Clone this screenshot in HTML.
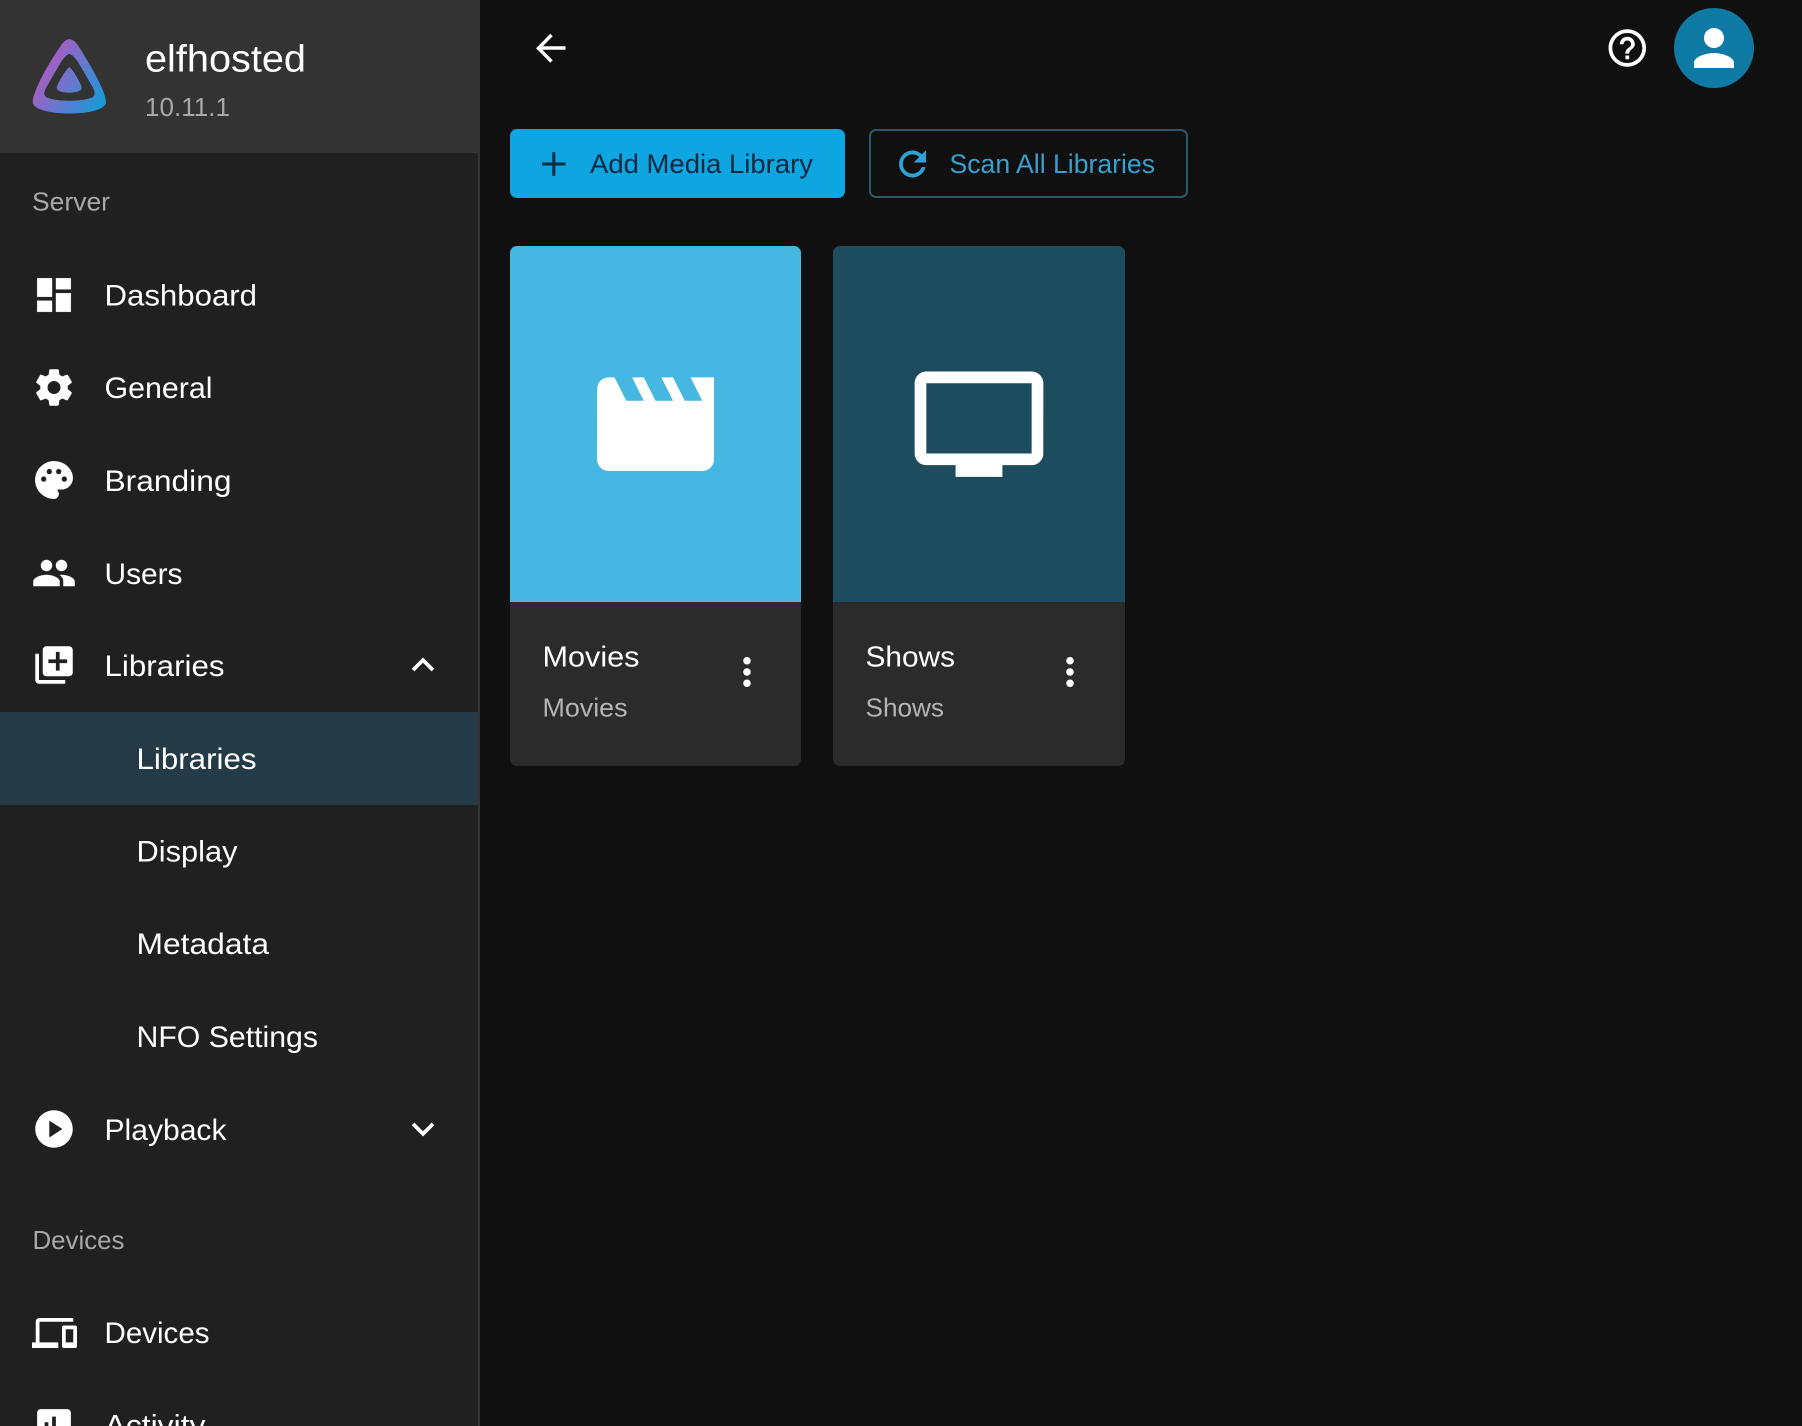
<!DOCTYPE html>
<html lang="en">
<head>
<meta charset="utf-8">
<title>Libraries</title>
<style>
html,body{margin:0;padding:0;background:#101010;width:1802px;height:1426px;overflow:hidden}
svg{display:block}
text{font-family:"Liberation Sans","Noto Sans CJK JP",sans-serif;}
.nav{font-size:30px;fill:#fff}
.sec{font-size:26px;fill:#a8a8a8}
.i{fill:#fff}
</style>
</head>
<body>
<svg xmlns="http://www.w3.org/2000/svg" width="1802" height="1426" viewBox="0 0 1802 1426">
<defs>
<linearGradient id="jf" gradientUnits="userSpaceOnUse" x1="42.3" y1="67.8" x2="113.1" y2="108.8">
<stop offset="0" stop-color="#AA5CC3"/><stop offset="1" stop-color="#00A4DC"/>
</linearGradient>
</defs>
<rect width="1802" height="1426" fill="#101010"/>

<!-- Sidebar -->
<rect x="0" y="0" width="478" height="1426" fill="#202020"/>
<rect x="478" y="0" width="2" height="1426" fill="#333333"/>
<rect x="0" y="0" width="479" height="153" fill="#333333"/>
<g fill="url(#jf)">
<path fill-rule="evenodd" d="M69.4 39.3C73 39.3 76 42 79 47C88 61 106 91 106 102C106 109 90 113.5 69.4 113.5C49 113.5 32.7 109 32.7 102C32.7 91 50 61 60 47C63 42 66 39.3 69.4 39.3zM69.4 54C67 54 64 58 61 62L47 86C43 93 44 96 47 97.5C53 100 61 100.7 69.4 100.7C78 100.7 86 100 92 97.5C95 96 96 93 92 86L78 62C75 58 72 54 69.4 54z"/>
<path d="M69.4 67.3C67 67.3 56.5 85 56.7 88C57 91 62 92.7 69.4 92.7C76 92.7 81.5 91 81.7 88C82 85 71.5 67.3 69.4 67.3z"/>
</g>
<text x="145" y="71.5" font-size="38" fill="#fff" textLength="161" lengthAdjust="spacingAndGlyphs">elfhosted</text>
<text x="145" y="116" class="sec" textLength="85" lengthAdjust="spacingAndGlyphs">10.11.1</text>
<text x="32" y="210.5" class="sec" textLength="78" lengthAdjust="spacingAndGlyphs">Server</text>

<rect x="0" y="712" width="478" height="93" fill="#243a46"/>

<text x="104.5" y="305.5" class="nav" textLength="152.5" lengthAdjust="spacingAndGlyphs">Dashboard</text>
<text x="104.5" y="398" class="nav" textLength="108" lengthAdjust="spacingAndGlyphs">General</text>
<text x="104.5" y="491" class="nav" textLength="127" lengthAdjust="spacingAndGlyphs">Branding</text>
<text x="104.5" y="584" class="nav" textLength="78" lengthAdjust="spacingAndGlyphs">Users</text>
<text x="104.5" y="676" class="nav" textLength="120" lengthAdjust="spacingAndGlyphs">Libraries</text>
<text x="136.5" y="769" class="nav" textLength="120" lengthAdjust="spacingAndGlyphs">Libraries</text>
<text x="136.5" y="861.5" class="nav" textLength="101" lengthAdjust="spacingAndGlyphs">Display</text>
<text x="136.5" y="954" class="nav" textLength="132.5" lengthAdjust="spacingAndGlyphs">Metadata</text>
<text x="136.5" y="1047" class="nav" textLength="181.5" lengthAdjust="spacingAndGlyphs">NFO Settings</text>
<text x="104.5" y="1140" class="nav" textLength="122" lengthAdjust="spacingAndGlyphs">Playback</text>
<text x="32.5" y="1249" class="sec" textLength="92" lengthAdjust="spacingAndGlyphs">Devices</text>
<text x="104.5" y="1343" class="nav" textLength="105" lengthAdjust="spacingAndGlyphs">Devices</text>
<text x="104.5" y="1435.5" class="nav" textLength="101" lengthAdjust="spacingAndGlyphs">Activity</text>

<!-- Sidebar icons -->
<g class="i">
<path transform="translate(31.5 272.5) scale(1.875)" d="M3 13h8V3H3v10zm0 8h8v-6H3v6zm10 0h8V11h-8v10zm0-18v6h8V3h-8z" stroke="#fff" stroke-width=".08"/>
<path transform="translate(31.5 365) scale(1.875)" stroke="#fff" stroke-width=".3" d="M19.14 12.94c.04-.3.06-.61.06-.94 0-.32-.02-.64-.07-.94l2.03-1.58c.18-.14.23-.41.12-.61l-1.92-3.32c-.12-.22-.37-.29-.59-.22l-2.39.96c-.5-.38-1.03-.7-1.62-.94l-.36-2.54c-.04-.24-.24-.41-.48-.41h-3.84c-.24 0-.43.17-.47.41l-.36 2.54c-.59.24-1.13.57-1.62.94l-2.39-.96c-.22-.08-.47 0-.59.22L2.74 8.87c-.12.21-.08.47.12.61l2.03 1.58c-.05.3-.09.63-.09.94s.02.64.07.94l-2.03 1.58c-.18.14-.23.41-.12.61l1.92 3.32c.12.22.37.29.59.22l2.39-.96c.5.38 1.03.7 1.62.94l.36 2.54c.05.24.24.41.48.41h3.84c.24 0 .44-.17.47-.41l.36-2.54c.59-.24 1.13-.56 1.62-.94l2.39.96c.22.08.47 0 .59-.22l1.92-3.32c.12-.22.07-.47-.12-.61l-2.01-1.58zM12 15.6c-1.98 0-3.6-1.62-3.6-3.6s1.62-3.6 3.6-3.6 3.6 1.62 3.6 3.6-1.62 3.6-3.6 3.6z"/>
<path transform="translate(31.5 457.5) scale(1.875)" stroke="#fff" stroke-width=".2" d="M12 2C6.49 2 2 6.49 2 12s4.49 10 10 10c1.38 0 2.5-1.12 2.5-2.5 0-.61-.23-1.2-.64-1.67-.08-.1-.13-.21-.13-.33 0-.28.22-.5.5-.5H16c3.31 0 6-2.69 6-6 0-4.96-4.49-9-10-9zm5.5 11c-.83 0-1.5-.67-1.5-1.5s.67-1.5 1.5-1.5 1.5.67 1.5 1.5-.67 1.5-1.5 1.5zm-3-4c-.83 0-1.5-.67-1.5-1.5S13.67 6 14.5 6s1.5.67 1.5 1.5S15.33 9 14.5 9zM5 11.5c0-.83.67-1.5 1.5-1.5s1.5.67 1.5 1.5S7.33 13 6.5 13 5 12.33 5 11.5zm6-4c0 .83-.67 1.5-1.5 1.5S8 8.33 8 7.5 8.67 6 9.5 6s1.5.67 1.5 1.5z"/>
<path transform="translate(31.5 550.5) scale(1.875)" stroke="#fff" stroke-width=".12" d="M16 11c1.66 0 2.99-1.34 2.99-3S17.66 5 16 5c-1.66 0-3 1.34-3 3s1.34 3 3 3zm-8 0c1.66 0 2.99-1.34 2.99-3S9.66 5 8 5C6.34 5 5 6.34 5 8s1.34 3 3 3zm0 2c-2.33 0-7 1.17-7 3.5V19h14v-2.5c0-2.33-4.67-3.5-7-3.5zm8 0c-.29 0-.62.02-.97.05 1.16.84 1.97 1.97 1.97 3.45V19h6v-2.5c0-2.33-4.67-3.5-7-3.5z"/>
<path transform="translate(31.5 642.5) scale(1.875)" d="M4 6H2v14c0 1.1.9 2 2 2h14v-2H4V6zm16-4H8c-1.1 0-2 .9-2 2v12c0 1.1.9 2 2 2h12c1.1 0 2-.9 2-2V4c0-1.1-.9-2-2-2zm-1 9h-4v4h-2v-4H9V9h4V5h2v4h4v2z"/>
<path transform="translate(400.5 642.5) scale(1.875)" d="M12 8l-6 6 1.41 1.41L12 10.83l4.59 4.58L18 14z"/>
<path transform="translate(31.5 1106.5) scale(1.875)" d="M12 2C6.48 2 2 6.48 2 12s4.48 10 10 10 10-4.48 10-10S17.52 2 12 2zM9.5 16.5v-9l7 4.5-7 4.5z"/>
<path transform="translate(400.5 1106.5) scale(1.875)" d="M16.59 8.59L12 13.17 7.41 8.59 6 10l6 6 6-6z"/>
<path transform="translate(32 1310.5) scale(1.875)" d="M4 6h18V4H4c-1.1 0-2 .9-2 2v11H0v3h14v-3H4V6zm19 2h-6c-.55 0-1 .45-1 1v10c0 .55.45 1 1 1h6c.55 0 1-.45 1-1V9c0-.55-.45-1-1-1zm-1 9h-4v-7h4v7z"/>
<path transform="translate(31.5 1403.5) scale(1.875)" d="M19 3H5c-1.1 0-2 .9-2 2v14c0 1.1.9 2 2 2h14c1.1 0 2-.9 2-2V5c0-1.1-.9-2-2-2zM9 17H7v-7h2v7zm4 0h-2V7h2v10zm4 0h-2v-4h2v4z"/>
</g>

<!-- Top bar -->
<path d="M565.5 48H538.5M551.5 35 538.5 48.2 551.5 61.5" fill="none" stroke="#fff" stroke-width="3.4"/>
<path class="i" transform="translate(1604.8 25.5) scale(1.875)" d="M11 18h2v-2h-2v2zm1-16C6.48 2 2 6.48 2 12s4.48 10 10 10 10-4.48 10-10S17.52 2 12 2zm0 18c-4.41 0-8-3.59-8-8s3.59-8 8-8 8 3.59 8 8-3.59 8-8 8zm0-14c-2.21 0-4 1.79-4 4h2c0-1.1.9-2 2-2s2 .9 2 2c0 2-3 1.75-3 5h2c0-2.25 3-2.5 3-5 0-2.21-1.79-4-4-4z"/>
<circle cx="1714" cy="48" r="40" fill="#0f7ba5"/>
<path class="i" transform="translate(1684 18) scale(2.5)" d="M12 12c2.21 0 4-1.79 4-4s-1.79-4-4-4-4 1.79-4 4 1.79 4 4 4zm0 2c-2.67 0-8 1.34-8 4v2h16v-2c0-2.66-5.33-4-8-4z"/>

<!-- Buttons -->
<rect x="510" y="129" width="335" height="69" rx="7" fill="#0ea5e0"/>
<path fill="#0b2a40" d="M552.3 152.2h3v10.3h10.3v3h-10.3v10.3h-3v-10.3H542v-3h10.3z"/>
<text x="590" y="173" font-size="27" fill="#0b2a40" textLength="223" lengthAdjust="spacingAndGlyphs">Add Media Library</text>

<rect x="870" y="130" width="317" height="67" rx="6" fill="none" stroke="#2c5869" stroke-width="2"/>
<path fill="#2ea3d6" stroke="#2ea3d6" stroke-width=".3" transform="translate(892.7 144.2) scale(1.65)" d="M17.65 6.35C16.2 4.9 14.21 4 12 4c-4.42 0-7.99 3.58-7.99 8s3.57 8 7.99 8c3.73 0 6.84-2.55 7.73-6h-2.08c-.82 2.33-3.04 4-5.65 4-3.31 0-6-2.69-6-6s2.69-6 6-6c1.66 0 3.14.69 4.22 1.78L13 11h7V4l-2.35 2.35z"/>
<text x="949.5" y="173" font-size="27" fill="#38a0cf" textLength="205.5" lengthAdjust="spacingAndGlyphs">Scan All Libraries</text>

<!-- Card: Movies -->
<rect x="510" y="246" width="291" height="520" rx="7" fill="#2b2b2b"/>
<path d="M510 602V253a7 7 0 0 1 7-7h277a7 7 0 0 1 7 7v349z" fill="#45b7e1"/>
<path class="i" transform="translate(585.3 354) scale(5.85)" d="M18 4l2 4h-3l-2-4h-2l2 4h-3l-2-4H8l2 4H7L5 4H4c-1.1 0-1.99.9-1.99 2L2 18c0 1.1.9 2 2 2h16c1.1 0 2-.9 2-2V4h-4z"/>
<text x="542.5" y="666.5" font-size="29" fill="#fff" textLength="97" lengthAdjust="spacingAndGlyphs">Movies</text>
<text x="542.5" y="716.5" font-size="26" fill="#b4b4b4" textLength="85" lengthAdjust="spacingAndGlyphs">Movies</text>
<path class="i" transform="translate(724.5 649.5) scale(1.875)" d="M12 8c1.1 0 2-.9 2-2s-.9-2-2-2-2 .9-2 2 .9 2 2 2zm0 2c-1.1 0-2 .9-2 2s.9 2 2 2 2-.9 2-2-.9-2-2-2zm0 6c-1.1 0-2 .9-2 2s.9 2 2 2 2-.9 2-2-.9-2-2-2z"/>

<!-- Card: Shows -->
<rect x="833" y="246" width="292" height="520" rx="7" fill="#2b2b2b"/>
<path d="M833 602V253a7 7 0 0 1 7-7h278a7 7 0 0 1 7 7v349z" fill="#1e4c5f"/>
<path class="i" transform="translate(908.8 354) scale(5.85)" d="M21 3H3c-1.1 0-2 .9-2 2v12c0 1.1.9 2 2 2h5v2h8v-2h5c1.1 0 1.99-.9 1.99-2L23 5c0-1.1-.9-2-2-2zm0 14H3V5h18v12z"/>
<text x="865.5" y="666.5" font-size="29" fill="#fff" textLength="89.5" lengthAdjust="spacingAndGlyphs">Shows</text>
<text x="865.5" y="716.5" font-size="26" fill="#b4b4b4" textLength="78.5" lengthAdjust="spacingAndGlyphs">Shows</text>
<path class="i" transform="translate(1047.5 649.5) scale(1.875)" d="M12 8c1.1 0 2-.9 2-2s-.9-2-2-2-2 .9-2 2 .9 2 2 2zm0 2c-1.1 0-2 .9-2 2s.9 2 2 2 2-.9 2-2-.9-2-2-2zm0 6c-1.1 0-2 .9-2 2s.9 2 2 2 2-.9 2-2-.9-2-2-2z"/>
</svg>
</body>
</html>
